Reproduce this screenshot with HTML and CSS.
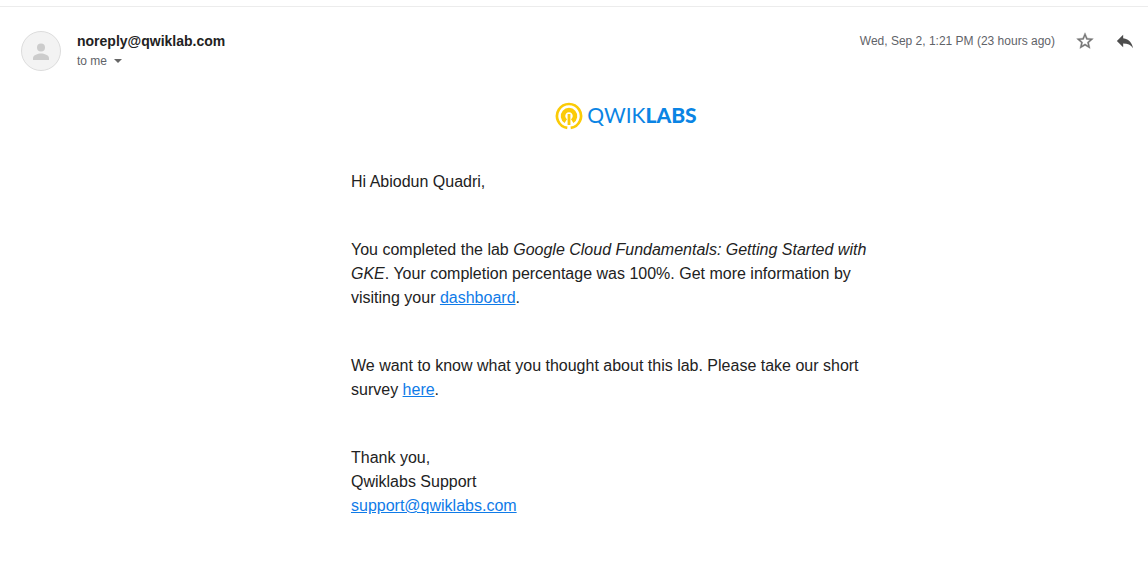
FILE: index.html
```html
<!DOCTYPE html>
<html lang="en">
<head>
<meta charset="utf-8">
<meta name="viewport" content="width=device-width, initial-scale=1">
<title>Qwiklabs mail</title>
<link rel="stylesheet" href="styles.css">
</head>
<body>
<article class="mail">
  <header class="mail-header">
    <svg class="avatar" viewBox="0 0 40 40" aria-hidden="true">
      <circle cx="20" cy="20" r="19.5" fill="#f3f3f3" stroke="#dcdcdc"/>
      <circle cx="20" cy="16.500" r="4" fill="#ccc"/>
      <path d="M12 29v-2c0-3 5-4.500 8-4.500s8 1.500 8 4.500v2z" fill="#ccc"/>
    </svg>
    <div class="sender">
      <h1 class="sender-name">noreply@qwiklab.com</h1>
      <button class="recipient" type="button">to me
        <svg class="caret" viewBox="0 0 8 4" aria-hidden="true"><path d="M0 0h8L4 4z" fill="#666"/></svg>
      </button>
    </div>
    <time class="date">Wed, Sep 2, 1:21 PM (23 hours ago)</time>
    <button class="icon-button" type="button" aria-label="Star">
      <svg class="icon" viewBox="0 0 24 24" fill="#757575" stroke="#757575" stroke-width=".4"><path d="M22 9.240l-7.190-.62L12 2 9.190 8.630 2 9.240l5.460 4.730L5.820 21 12 17.270 18.180 21l-1.630-7.030L22 9.240zM12 15.400l-3.760 2.270 1-4.280-3.320-2.880 4.380-.38L12 6.100l1.710 4.040 4.380.38-3.320 2.880 1 4.280L12 15.400z"/></svg>
    </button>
    <button class="icon-button" type="button" aria-label="Reply">
      <svg class="icon" viewBox="0 0 24 24" fill="#4d4d4d"><path d="M10 9V5l-7 7 7 7v-4.100c5 0 8.500 1.600 11 5.100-1-5-4-10-11-11z" transform="translate(-1 -1) scale(1.080)"/></svg>
    </button>
  </header>
  <div class="content">
    <div class="logo">
      <svg class="logo-mark" viewBox="0 0 28 28" aria-hidden="true">
        <g fill="none" stroke="#fbcb07">
          <path d="M12.300 25.900A12 12 0 1 1 15.700 25.900" stroke-width="2.700"/>
          <path d="M10.800 19.100A6 6 0 1 1 17.200 19.100" stroke-width="4.500"/>
          <path d="M14 12v11" stroke-width="2.800"/>
        </g>
      </svg>
      <span class="logo-text">QWIK<b class="logo-strong">LABS</b></span>
    </div>
    <p class="paragraph">Hi Abiodun Quadri,</p>
    <p class="paragraph">You completed the lab <em>Google Cloud Fundamentals: Getting Started with GKE</em>. Your completion percentage was 100%. Get more information by visiting your <a class="link" href="#dashboard">dashboard</a>.</p>
    <p class="paragraph">We want to know what you thought about this lab. Please take our short survey <a class="link" href="#survey">here</a>.</p>
    <p class="paragraph">Thank you,<br>Qwiklabs Support<br><a class="link" href="mailto:support@qwiklabs.com">support@qwiklabs.com</a></p>
  </div>
</article>
</body>
</html>
```

FILE: styles.css
```css
* { box-sizing: border-box; }
body {
  margin: 0;
  background: #fff;
  color: #222;
  font-family: "Liberation Sans", Arial, sans-serif;
}
button {
  padding: 0;
  border: 0;
  background: none;
  font: inherit;
  cursor: pointer;
}
.mail {
  padding-top: 6px;
}
.mail-header {
  display: flex;
  align-items: flex-start;
  border-top: 1px solid #ececec;
  padding: 24px 13px 0 21px;
}
.avatar {
  width: 40px;
  height: 40px;
  margin-right: 16px;
}
.sender { flex: 1; }
.sender-name {
  margin: 0;
  font-size: 14px;
  line-height: 20px;
}
.recipient {
  display: flex;
  align-items: center;
  gap: 7px;
  color: #5f6368;
  font-size: 12px;
  line-height: 20px;
}
.caret {
  width: 8px;
  height: 4px;
}
.date {
  color: #5f6368;
  font-size: 12px;
  line-height: 20px;
}
.icon-button {
  display: flex;
  margin-left: 20px;
}
.icon {
  width: 20px;
  height: 20px;
}
.content {
  padding-left: 104px;
  font-size: 16px;
  line-height: 24px;
}
.content > * {
  max-width: 550px;
  margin-left: auto;
  margin-right: auto;
}
.logo {
  display: flex;
  align-items: center;
  justify-content: center;
  gap: 4px;
  height: 28px;
  margin-top: 31px;
  margin-bottom: 40px;
}
.logo-mark {
  width: 28px;
  height: 28px;
}
.logo-text {
  padding-bottom: 2px;
  color: #0a84e4;
  font-family: Lato, sans-serif;
  font-size: 21px;
  font-weight: 400;
}
.logo-strong { font-weight: 900; }
.paragraph {
  margin-top: 0;
  margin-bottom: 44px;
}
.paragraph:last-child { margin-bottom: 0; }
.link { color: #0f7be8; }
```
